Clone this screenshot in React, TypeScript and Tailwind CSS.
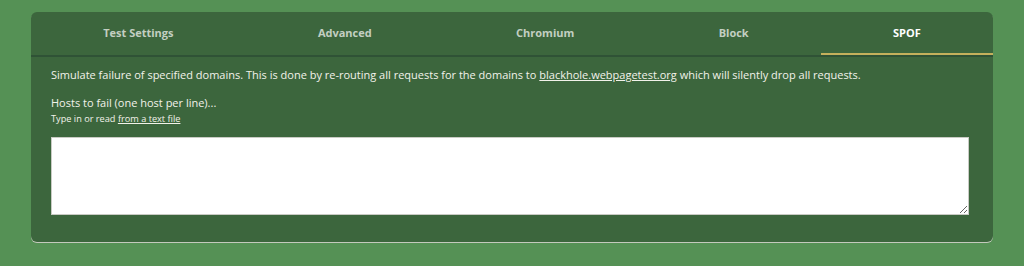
import React from "react";

const tabs = ["Test Settings", "Advanced", "Chromium", "Block", "SPOF"];

export default function App() {
  const active = "SPOF";
  return (
    <main
      className="min-h-[266px] bg-[#559155] pt-3 px-[31px] pb-6"
      style={{ fontFamily: '"Open Sans", "Liberation Sans", sans-serif' }}
    >
      <div className="rounded-md bg-[#3c663d] shadow-[0_1px_0_#c4c9bd]">
        <div className="flex border-b-2 border-[#2f5236]">
          {tabs.map((t) => (
            <div
              key={t}
              className={
                t === active
                  ? "flex-auto h-[43px] flex items-center justify-center text-[11px] font-bold text-white border-b-2 border-[#c4b05c] -mb-[2px] pt-[2px]"
                  : "flex-auto h-[43px] flex items-center justify-center text-[11px] font-bold text-[#c3cfc2]"
              }
            >
              {t}
            </div>
          ))}
        </div>
        <div className="pl-5 pr-6 pt-[10px] pb-[27px] text-[#f2f2ea]">
          <p className="text-[11px] leading-[16px]">
            Simulate failure of specified domains. This is done by re-routing all requests for the domains to{" "}
            <a href="#" className="underline">blackhole.webpagetest.org</a> which will silently drop all requests.
          </p>
          <p className="mt-[12px] text-[11px] leading-[16px]">Hosts to fail (one host per line)...</p>
          <p className="mt-[1px] text-[9.2px] leading-[13px]">
            Type in or read <a href="#" className="underline">from a text file</a>
          </p>
          <textarea className="mt-[12px] block w-full h-[78px] bg-white border border-[#c9cbc4] text-black text-sm" />
        </div>
      </div>
    </main>
  );
}
